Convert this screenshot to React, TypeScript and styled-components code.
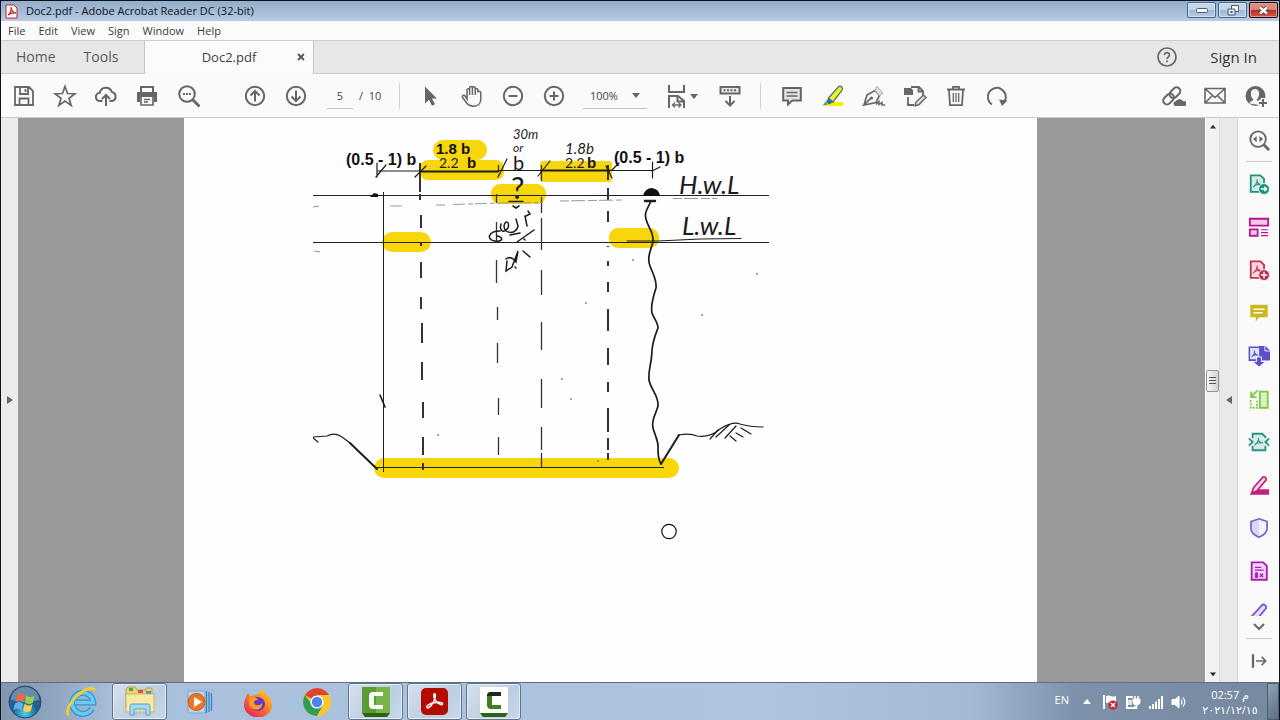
import React from "react";
import styled, { createGlobalStyle, css } from "styled-components";

const ui = `"Open Sans", "Noto Sans", "DejaVu Sans", sans-serif`;

const GlobalStyle = createGlobalStyle`
  * { box-sizing: border-box; }
  body { margin: 0; font-family: ${ui}; font-size: 11px; color: #333; }
  button, input, select { font: inherit; color: inherit; background: none; border: 0; padding: 0; margin: 0; }
  svg { display: block; flex: none; }
`;

const Desktop = styled.div`
  display: flex;
  flex-direction: column;
  height: 100vh;
  border: 1px solid #10121c;
  border-bottom: 0;
  overflow: hidden;
`;

/* ---------- title bar ---------- */
const TitleBar = styled.header`
  display: flex;
  align-items: center;
  height: 20px;
  flex: none;
  padding-left: 4px;
  background: linear-gradient(#93aecb, #a7bdd8 60%, #b9cce4);
`;
const Title = styled.h1`
  margin: 0 auto 0 8px;
  font-size: 11px;
  line-height: 16px;
  font-weight: 400;
  color: #10141c;
`;
const WindowButtons = styled.div`
  display: flex;
  gap: 2px;
  align-self: flex-start;
  padding: 1px 1px 0 0;
`;
const WindowButton = styled.button<{ $close?: boolean }>`
  display: grid;
  place-items: center;
  width: 29px;
  height: 16px;
  border: 1px solid #4c6484;
  border-radius: 2px;
  box-shadow: inset 0 0 0 1px #d3e2f3;
  background: linear-gradient(#c3d5ea 48%, #9db8d6 52%, #b7cde6);
  ${(p) =>
    p.$close &&
    css`
      border-color: #30060a;
      box-shadow: inset 0 0 0 1px #dc9a92;
      background: linear-gradient(#d98b80 45%, #b92f24 52%, #cf5a48);
    `}
`;

/* ---------- menu and tabs ---------- */
const MenuBar = styled.nav`
  display: flex;
  align-items: center;
  gap: 13px;
  height: 19px;
  flex: none;
  padding-left: 7px;
  background: #fbfbfb;
`;
const MenuItem = styled.button`
  line-height: 18px;
  color: #3c3c3c;
`;
const TabBar = styled.div`
  display: flex;
  align-items: stretch;
  height: 34px;
  flex: none;
  background: #e8e7e8;
  border-top: 1px solid #cfcfcf;
  box-shadow: inset 0 -1px #cbcbcb;
  font-size: 14px;
`;
const HomeTabs = styled.div`
  display: flex;
  gap: 28px;
  width: 144px;
  padding-left: 15px;
  padding-bottom: 2px;
  border-right: 1px solid #c4c4c4;
`;
const TabButton = styled.button`
  color: #5a5a5a;
`;
const FileTab = styled.div`
  display: grid;
  grid-template-columns: 24px 1fr 24px;
  align-items: center;
  width: 169px;
  padding-bottom: 2px;
  background: #fbfbfb;
  border-right: 1px solid #c4c4c4;
  font-size: 13px;
  text-align: center;
  color: #3f3f3f;
`;
const FileName = styled.button`
  grid-column: 2;
`;
const CloseTab = styled.button`
  display: grid;
  place-items: center;
  height: 24px;
`;
const Account = styled.div`
  display: flex;
  align-items: center;
  gap: 32px;
  margin-left: auto;
  padding-right: 22px;
  padding-bottom: 2px;
  font-size: 15px;
`;

/* ---------- tool bar ---------- */
const ToolBar = styled.div`
  display: flex;
  align-items: center;
  height: 44px;
  flex: none;
  padding: 0 3px 0 2px;
  background: #fafafa;
  border-bottom: 1px solid #c9c9c9;
`;
const Group = styled.div<{ $before?: number; $end?: boolean }>`
  display: flex;
  margin-left: ${(p) => (p.$end ? "auto" : `${p.$before ?? 0}px`)};
`;
const ToolButton = styled.button`
  display: grid;
  place-items: center;
  width: 41px;
  height: 40px;
`;
const FitButton = styled.button`
  display: flex;
  align-items: center;
  gap: 1px;
  height: 40px;
  width: 41px;
  margin-left: 18px;
`;
const Divider = styled.span`
  width: 1px;
  height: 26px;
  background: #d0d0d0;
`;
const PageField = styled.label`
  display: flex;
  align-items: center;
  gap: 6px;
  width: 72px;
  margin-left: 11px;
  color: #444;
`;
const PageInput = styled.input`
  width: 26px;
  height: 26px;
  text-align: center;
  border-bottom: 1px solid #c2c2c2;
`;
const ZoomField = styled.label`
  display: flex;
  align-items: center;
  width: 64px;
  height: 26px;
  margin-left: 9px;
  padding-left: 7px;
  border-bottom: 1px solid #c2c2c2;
  color: #444;
`;
const ZoomSelect = styled.select`
  appearance: none;
  width: 42px;
`;

/* ---------- work area ---------- */
const Work = styled.div`
  display: flex;
  flex: 1;
  min-height: 0;
`;
const SideStrip = styled.button`
  display: grid;
  place-items: center;
  width: 17px;
  flex: none;
  background: #ececec;
`;
const DocumentArea = styled.main`
  display: flex;
  justify-content: center;
  flex: 1;
  min-width: 0;
  padding-right: 2px;
  overflow: hidden;
  background: #999;
`;
const Sheet = styled.article`
  flex: none;
  width: 853px;
  padding-left: 129px;
  background: #fefefe;
`;
const ScrollBar = styled.div`
  display: flex;
  flex-direction: column;
  align-items: center;
  width: 15px;
  flex: none;
  background: #f1f1f1;
  border-left: 1px solid #fff;
  border-right: 1px solid #dadada;
`;
const ScrollArrow = styled.button`
  display: grid;
  place-items: center;
  width: 13px;
  height: 17px;
`;
const Track = styled.span<{ $grow: number }>`
  flex: ${(p) => p.$grow};
`;
const Thumb = styled.button`
  display: grid;
  place-items: center;
  width: 13px;
  height: 22px;
  border: 1px solid #959595;
  border-radius: 2px;
  background: linear-gradient(90deg, #f6f6f6, #d3d3d3);
`;
const PaneToggle = styled.button`
  display: grid;
  place-items: center;
  width: 18px;
  flex: none;
  background: #e9e9e9;
  border-right: 1px solid #d2d2d2;
`;
const ToolsPane = styled.aside`
  display: flex;
  flex-direction: column;
  width: 41px;
  flex: none;
  background: #fafafa;
`;
const PaneList = styled.div`
  flex: 1;
  min-height: 0;
  overflow: hidden;
`;
const PaneButton = styled.button<{ $short?: boolean }>`
  display: grid;
  place-items: center;
  width: 41px;
  height: ${(p) => (p.$short ? 22 : 43)}px;
`;
const PaneRule = styled.hr`
  width: 26px;
  height: 1px;
  flex: none;
  margin: 0 auto;
  border: 0;
  background: #cfcaca;
`;

/* ---------- task bar ---------- */
const TaskBar = styled.footer`
  display: flex;
  align-items: stretch;
  height: 38px;
  flex: none;
  border-top: 1px solid #5b6f87;
  background: linear-gradient(90deg, #8296ae, #8fa4be 4%, #a9c0dc 9%, #adc5e0 60%, #a3bad5 76%, #7d91aa 84%, #76899f);
`;
const Apps = styled.div`
  display: flex;
  gap: 4px;
`;
const AppButton = styled.button<{ $open?: boolean; $start?: boolean }>`
  display: grid;
  place-items: center;
  width: ${(p) => (p.$start ? 48 : 55)}px;
  ${(p) =>
    p.$open &&
    css`
      border: 1px solid #61748c;
      border-radius: 3px;
      box-shadow: inset 0 0 0 1px #e4edf7;
      background: linear-gradient(135deg, #d6e0ec, #bccee2 60%, #c9d9eb);
    `}
`;
const Tray = styled.div`
  display: flex;
  align-items: center;
  gap: 5px;
  margin-left: auto;
  color: #fff;
`;
const TrayButton = styled.button`
  display: grid;
  place-items: center;
  width: 18px;
  height: 24px;
`;
const Language = styled.button`
  margin-right: 4px;
  line-height: 16px;
  padding-bottom: 4px;
`;
const Clock = styled.button`
  width: 64px;
  margin-left: 5px;
  line-height: 15px;
  text-align: center;
`;
const ShowDesktop = styled.button`
  width: 12px;
  align-self: stretch;
  border: 1px solid #4c5d73;
  background: linear-gradient(135deg, #90a1b5, #5d6f86);
`;

/* ---------- icons ---------- */
type IconProps = { size?: number; color?: string; children: React.ReactNode; width?: number };
const Icon = ({ size = 24, color = "#666", width = 2, children }: IconProps) => (
  <svg width={size} height={size} viewBox="0 0 24 24" fill="none" stroke={color} strokeWidth={width} aria-hidden="true">
    {children}
  </svg>
);
const Caret = ({ dir = "down", color = "#666", size = 8 }: { dir?: string; color?: string; size?: number }) => {
  const d: Record<string, string> = {
    down: "M0 2h8L4 7z",
    up: "M0 6h8L4 1z",
    left: "M7 0v8L1 4z",
    right: "M1 0v8l6-4z",
  };
  return (
    <svg width={size} height={size} viewBox="0 0 8 8" fill={color} aria-hidden="true">
      <path d={d[dir]} />
    </svg>
  );
};

const fileTools = [
  ["Save", <path key="a" d="M3 3h14l4 4V21H3zM8 3.500v6.500h8V3.500M7.500 20.500v-6h9v6M13.500 5v3" strokeWidth={1.800} />],
  ["Star", <path key="a" d="M12 2.500l2.500 7 7.400.2-5.900 4.500 2.200 7.200-6.200-4.300-6.200 4.300L8 14.200 2.100 9.700l7.400-.2z" strokeWidth={1.700} />],
  ["Upload", <g key="a"><path d="M8.500 17H6.200a4.100 4.100 0 0 1-.4-8.200A6.200 6.200 0 0 1 17.800 8a4.600 4.600 0 0 1 .2 9h-2.500" /><path d="M12 22V11M8 15l4-4 4 4" /></g>],
  ["Print", <g key="a"><path d="M6 8V3h12V8" /><path d="M2 8h20v10h-3v-5H5v5H2z" fill="#666" stroke="none" /><path d="M6 13v8h12v-8M9 15.500h6M9 18h4" strokeWidth={1.700} /></g>],
  ["Find", <g key="a"><circle cx="11" cy="10" r="7.800" /><path d="M16.500 15.500l7 7" strokeWidth={2.800} /><path d="M7 10h2M10 10h2M13 10h2" /></g>],
] as const;
const pageTools = [
  ["Previous page", <g key="a"><circle cx="12" cy="12" r="9.200" /><path d="M12 17.500V7M7.500 11.500L12 7l4.500 4.500" /></g>],
  ["Next page", <g key="a"><circle cx="12" cy="12" r="9.200" /><path d="M12 6.500V17M7.500 12.500L12 17l4.500-4.500" /></g>],
] as const;
const viewTools = [
  ["Select", <path key="a" d="M6 2.500v17l4-3.800 3 6 3-1.400-3-5.800h5z" fill="#666" stroke="none" />],
  ["Hand", <path key="a" d="M7 15V6.200c0-2 2.600-2 2.600 0V11 4c0-2 2.800-2 2.800 0v7V4.300c0-2 2.800-2 2.800 0V11 6c0-1.900 2.600-1.900 2.600 0v2.500c.2-1.800 3-1.600 3 .5V15c0 4.500-2.800 7.200-7 7.200-4.500 0-6.800-2.200-8.600-5.200L2.600 13.500c-1-2 1.300-2.900 2.500-1.500z" strokeWidth={1.500} />],
  ["Zoom out", <g key="a"><circle cx="12" cy="12" r="9.200" /><path d="M7.500 12h9" /></g>],
  ["Zoom in", <g key="a"><circle cx="12" cy="12" r="9.200" /><path d="M7.500 12h9M12 7.500v9" /></g>],
] as const;
const editTools = [
  ["Comment", <g key="a"><path d="M3.200 4h17.600v12.500h-8.500L8 20.500v-4H3.200z" fill="#e3e3e3" /><path d="M6.500 8.500h11M6.500 12h11" strokeWidth={1.500} /></g>],
  ["Highlight", <g key="a"><path d="M3 18h19v4H5z" fill="#f6f000" stroke="none" /><path d="M7.500 14L17.500 2.800c2-1.400 4.800.6 3.700 3L12 18z" fill="#edf71c" stroke="#4b7a78" strokeWidth={1.300} /><path d="M7.300 14l4.700 4.200-4 2.300-3-2.500z" fill="#2f6fb5" stroke="none" /><path d="M5 17.500L1.500 21.500l4.500-.6z" fill="#4d87c2" stroke="none" /></g>],
  ["Sign", <g key="a"><path d="M2 21L5 11l8-4.500 4.500 5-3.500 7L2 21l7-7" strokeWidth={1.700} /><path d="M13 6.500l2-4 6 6.500-3.500 2.500z" fill="#dedede" stroke="#aaa" strokeWidth={1} /><path d="M14 20.500l3-3v3l3-2v2.500h3" strokeWidth={1.500} /><circle cx="9.500" cy="14" r="1.600" fill="#666" stroke="none" /></g>],
  ["Edit", <g key="a"><path d="M8 3h8l4 4v4M15.500 3v4.500h4.500M5 13v8h6" strokeWidth={1.800} /><path d="M1 4h7l2 2v5H1z" fill="#666" stroke="none" /><path d="M12 21.800l1-3.800 7.500-7 2.500 2.600-7.300 7.200z" fill="#ddd" strokeWidth={1.400} /></g>],
  ["Delete", <g key="a"><path d="M3 5.500h18M9 5V2.800h6V5M5 6l1 15.200h12L19 6" strokeWidth={1.800} /><path d="M9.300 9v9M12 9v9M14.700 9v9" strokeWidth={1.300} /></g>],
  ["Rotate", <g key="a"><path d="M7 20.500a9 9 0 1 1 12.800-3.500" /><path d="M14 15.500l8.500 1-5.500 5.500z" fill="#666" stroke="none" /></g>],
] as const;
const shareTools = [
  ["Share link", <g key="a"><g transform="rotate(-45 11 11)"><rect x="-1" y="7" width="12" height="7.500" rx="3.700" /><rect x="8" y="7" width="12" height="7.500" rx="3.700" /></g><path d="M13 22.500a3 3 0 0 1 .8-5.800 4.200 4.200 0 0 1 7.200 0 3 3 0 0 1 2 5.800z" fill="#666" stroke="#fafafa" strokeWidth={1} /></g>],
  ["Mail", <path key="a" d="M2 4.500h20v14.500H2zM2.500 5l9.500 8.500L21.500 5M2.500 18.500l7-7M21.500 18.500l-7-7" strokeWidth={1.600} />],
  ["Add person", <g key="a"><circle cx="11.500" cy="12" r="10" fill="#666" stroke="none" /><path d="M5.500 19.500c.3-2.500 3.700-2.300 3.700-4C7 13.500 6.600 10.500 7 8c.8-4 7.300-4 8 0 .4 2.500 0 5.500-2.200 7.500 0 1.700 2 1.800 3 2.500l-1 3z" fill="#f6f6f6" stroke="none" /><path d="M19 14v9M14.500 18.500h9" stroke="#fafafa" strokeWidth={5} /><path d="M19 15v8M15 19h8" strokeWidth={2} /></g>],
] as const;

const Acro = ({ color }: { color: string }) => (
  <path d="M5.500 15.500c2-1 5-5.500 4.500-8.500M9.800 9c.8 2.500 2.700 4 5 4M6.500 14c2-1.200 5-1.800 8-1.500" stroke={color} strokeWidth={1.200} />
);
const PdfSheet = ({ color, fill }: { color: string; fill: string }) => (
  <>
    <path d="M3 2.500h10.500l4 4V20.500H3z" fill={fill} stroke={color} />
    <Acro color={color} />
  </>
);
const paneTools = [
  ["Export PDF", "#27907f", <g key="a"><PdfSheet color="#27907f" fill="#d3ece8" /><circle cx="17.500" cy="17.500" r="6" fill="#1e9080" stroke="#fafafa" strokeWidth={1} /><path d="M14 17.500h6M17.800 15l2.500 2.500-2.500 2.500" stroke="#fff" strokeWidth={1.500} /></g>],
  ["Organize", "#b5188f", <g key="a"><path d="M2 3h20v7.500H2z" fill="#f5c8ea" /><path d="M2 14.500h8.500v7H2z" fill="#f5c8ea" /><path d="M14 15h8M14 18.200h8M14 21.400h8" strokeWidth={1.300} /></g>],
  ["Create PDF", "#c33250", <g key="a"><PdfSheet color="#c33250" fill="#f9d9de" /><circle cx="17.500" cy="17.500" r="6" fill="#c12d50" stroke="#fafafa" strokeWidth={1} /><path d="M14 17.500h7M17.500 14v7" stroke="#fff" strokeWidth={1.600} /></g>],
  ["Comment", "#cdb81c", <g key="a"><path d="M2.500 3h19v13.500H12L8.500 21v-4.500h-6z" fill="#cdb81c" stroke="none" /><path d="M6 8h12M6 11.800h10" stroke="#fff" strokeWidth={1.700} /></g>],
  ["Combine", "#5b50cc", <g key="a"><path d="M12 1h7l5 5v11H12z" fill="#5b50cc" stroke="none" /><path d="M18.500 1v5.500H24" stroke="#fafafa" strokeWidth={1} /><path d="M1.500 2.500h11.500v14H1.500z" fill="#e4e2f8" stroke="#5b50cc" strokeWidth={1.700} /><path d="M4 13c1.500-1 3.500-4 3-7M7 8c.5 2 2 3 4 3.200M4.500 11.500l5-1" strokeWidth={1.200} /><path d="M9.300 13h5.400v5H19l-7 6-7-6h4.300z" fill="#5b50cc" stroke="#fafafa" strokeWidth={1} /></g>],
  ["Compress pages", "#7fc944", <g key="a"><path d="M13 4h8.500v17.500H13z" fill="#d9f3c6" /><path d="M10 14v7.500H3V13" strokeDasharray="2 1.500" /><path d="M10.500 2.500L4 9M3.500 4v6h6" strokeWidth={2} /></g>],
  ["Compress PDF", "#2b9384", <g key="a"><path d="M5 8V3h10.500L19 6.500V8M19 16v5H5v-5" fill="#d3ece8" /><path d="M5 8h14v8H5z" fill="#d3ece8" stroke="none" /><path d="M1 8l4 4-4 4M23 8l-4 4 4 4" /><path d="M7 15.500c2-1 5-4.500 4.500-8M11.300 9.500c.8 2 2.500 3.500 5 3.500M8 14c2-1 5-1.500 7-1" strokeWidth={1.200} /></g>],
  ["Redact", "#b5207c", <g key="a"><path d="M10 16.500h13v6H1.500z" fill="#c0217f" stroke="none" /><path d="M6 15L16 3.600c1.700-1.600 5 .6 3.700 3L9.500 18.500 4 21z" fill="#f7d3e6" strokeWidth={1.800} /></g>],
  ["Protect", "#6f5fc8", <g key="a"><path d="M12 2l8.800 3v7.500c0 4.500-4 7.500-8.800 9.500-4.800-2-8.800-5-8.800-9.500V5z" fill="#f3f1fc" stroke="none" /><path d="M12 2v20c-4.800-2-8.800-5-8.800-9.500V5z" fill="#dad6f5" stroke="none" /><path d="M12 2l8.800 3v7.500c0 4.500-4 7.500-8.800 9.500-4.800-2-8.800-5-8.800-9.500V5z" strokeWidth={1.800} /></g>],
  ["Prepare form", "#a31fae", <g key="a"><path d="M4 2.500h12.500l4 4v15H4z" fill="#f4d5f7" /><path d="M7.500 8h7M7.500 11h9.500" strokeWidth={1.500} /><path d="M8 14h2.500v5H8z" fill="#a31fae" strokeWidth={1} /><path d="M13 15l3.500 3.500M16.500 15L13 18.500" strokeWidth={1.400} /></g>],
] as const;

/* ---------- the drawing on the sheet ---------- */
const Ink = styled.g`
  fill: none;
  stroke: #1c1c1c;
  stroke-linecap: round;
`;
const Typed = styled.text<{ $large?: boolean }>`
  font: bold ${(p) => (p.$large ? 16 : 15)}px "Liberation Sans", sans-serif;
  fill: #111;
`;
const Written = styled.text<{ $size: number; $slant?: boolean }>`
  font-family: Lato, sans-serif;
  font-weight: 400;
  font-size: ${(p) => p.$size}px;
  font-style: ${(p) => (p.$slant ? "italic" : "normal")};
  fill: #1c1c1c;
`;
const markers = [
  [433, 140, 54, 20, 10],
  [420, 160, 84, 20, 8],
  [491, 184, 55, 20, 9],
  [540, 161, 72, 21, 3],
  [382, 232, 49, 20, 10],
  [609, 228, 50, 20, 9],
  [374, 458, 305, 20, 10],
];
const dashes: [number, number[][]][] = [
  [419, [[163, 192], [194, 200]]],
  [420, [[215, 228], [243, 246], [262, 278], [297, 309]]],
  [421, [[323, 343], [362, 380]]],
  [422, [[402, 418], [437, 455], [463, 470]]],
  [496, [[194, 203], [222, 243], [260, 283]]],
  [497, [[307, 320], [343, 363]]],
  [498, [[165, 172], [398, 415], [437, 455]]],
  [541, [[165, 181], [197, 213], [218, 250], [270, 295], [322, 350], [379, 408], [427, 450], [453, 467]]],
  [607, [[165, 180], [188, 200], [211, 222], [246, 247], [261, 266], [282, 292], [309, 331], [348, 365], [382, 392], [408, 432], [438, 450], [453, 460]]],
];

const Section = () => (
  <svg width="460" height="564" viewBox="313 118 460 564" role="img" aria-label="Cross section sketch">
    {markers.map(([x, y, w, h, r]) => (
      <rect key={`${x}-${y}`} x={x} y={y} width={w} height={h} rx={r} fill="#f7d60c" />
    ))}
    <path d="M313 195.500H769M313 242.500H769M383.500 192V472M376 467.500H664" stroke="#222" strokeWidth="1" />
    <Ink>
      {dashes.map(([x, parts]) =>
        parts.map(([a, b]) => {
          const bold = x > 600 || x < 424;
          return (
            <path
              key={`${x}-${a}`}
              d={`M${bold ? x + 1 : x + 0.5} ${a}V${b}`}
              strokeWidth={bold ? 2 : 1.3}
              stroke="#333"
              strokeLinecap="butt"
            />
          );
        })
      )}
    </Ink>
    <Ink strokeWidth="1.200">
      <path d="M378 171H420M498 170.500H541M611 170.500H653" />
      <path d="M420 171.500H498M541 170.500H610" strokeWidth="1.800" />
      <path d="M377 163V177M376 177L386 165M415 177L426 166M498 177L507 159M538 176L550 161M612 170L619 163M652.500 162V178M652 171L660 167M606 166L612 178" />
      <path d="M380 395L385 407" strokeWidth="1.600" />
      <path d="M651 201C648 208 644 212 646 219C648 228 654 232 653 242C650 252 647 258 650 266C653 274 657 280 656 288C652 300 651 308 652 313C654 319 658 322 658 328C655 336 653 340 652 350C652 362 648 370 649 380C651 390 659 396 658 406C656 414 651 420 653 428C655 436 659 441 658 449C658 456 659 461 661 464" strokeWidth="1.700" />
      <path d="M661 464L679 435M350 443L377 469" strokeWidth="2" />
      <path d="M679 435Q690 433 697 436Q710 438 720 429Q733 421 740 424Q750 427 763 427M313 437L327 436Q335 432 342 437L350 443M313 438L318 442" />
      <path d="M718 430L710 439M729 425L716 437M736 426L725 438M730 436L736 441M736 433L743 437M741 428L751 434" />
      <path d="M645 201H655" strokeWidth="2.400" />
      <path d="M509 201.500H523M513 206L516 208L519 206" strokeWidth="1.600" />
      <path d="M658 241L700 239L741 238.500M627 241H658" strokeWidth="1.200" />
    </Ink>
    <path d="M643 196Q645 188 652 188Q659 189 660 196zM370 197L374 193L378 194V197z" fill="#111" />
    <g fill="none" stroke="#999" strokeWidth="1">
      <path d="M390 206H402M453 204.500L500 203L543 202.500" strokeDasharray="12 3 5 2" />
      <path d="M436 205H447M560 201L622 200M673 198.500H717" strokeDasharray="9 2 14 3" />
      <path d="M313 207l6-1M314 251l6 1" />
    </g>
    <g fill="#888">
      {[[438, 435], [571, 399], [633, 260], [702, 315], [757, 274], [562, 379], [586, 303], [598, 461]].map(([x, y]) => (
        <circle key={x} cx={x} cy={y} r="1" />
      ))}
    </g>
    <Typed $large x="346" y="165">(0.5 - 1) b</Typed>
    <Typed x="436" y="154">1.8 b</Typed>
    <Typed x="467" y="168">b</Typed>
    <Typed x="587" y="168">b</Typed>
    <Typed $large x="614" y="163">(0.5 - 1) b</Typed>
    <Written $size={14} x="439" y="168">2.2</Written>
    <Written $size={14} x="565" y="168">2.2</Written>
    <Written $size={15} $slant x="565" y="154">1.8b</Written>
    <Written $size={13} $slant x="513" y="139">30m</Written>
    <Written $size={12} $slant x="513" y="152">or</Written>
    <Written $size={20} x="513" y="170">b</Written>
    <Written $size={30} x="511" y="199">?</Written>
    <Written $size={26} $slant x="679" y="194">H.w.L</Written>
    <Written $size={26} $slant x="682" y="235">L.w.L</Written>
    {/* pen scribble under the question mark */}
    <Ink strokeWidth="1.500">
      <path d="M501 224C499 231 504 234 508 228C510 221 505 220 504 226C504 234 516 235 518 226L516 219M500 231C488 231 486 240 495 241C503 242 504 237 497 236M510 235L520 233M525 216L527 226M526 216L530 214L528 211M534 230L517 242M524 239L525 240M507 261L506 271L512 267L518 251L516 262C513 258 510 256 506 259M523 251L530 257M515 267L516 268" />
    </Ink>
    <circle cx="669" cy="531.500" r="7.200" fill="#fff" stroke="#111" strokeWidth="1.200" />
  </svg>
);

/* ---------- task bar pictures ---------- */
const StartOrb = () => (
  <svg width="34" height="34" viewBox="0 0 34 34" aria-hidden="true">
    <defs>
      <radialGradient id="orb" cx="50%" cy="85%" r="85%">
        <stop offset="0" stopColor="#4fd0f0" />
        <stop offset=".45" stopColor="#1a6398" />
        <stop offset="1" stopColor="#3b5f86" />
      </radialGradient>
    </defs>
    <circle cx="17" cy="17" r="16" fill="url(#orb)" stroke="#28486b" />
    <path d="M3 15a14 13 0 0 1 28 0q-14 4-28 0z" fill="#fff" opacity=".28" />
    <path d="M9 10q4-3 8 0l-1.500 7q-4-3-8 0z" fill="#ef6a3a" />
    <path d="M18.500 10.500q4 3 8 0L25 17.500q-4 3-8 0z" fill="#9ccc4a" />
    <path d="M7 18.500q4-3 8 0l-1.500 6.500q-4-3-8 0z" fill="#63b2ee" />
    <path d="M16.500 19q4 3 8 0L23 25.500q-4 3-8 0z" fill="#fbd14b" />
  </svg>
);
const Explorer = () => (
  <svg width="32" height="32" viewBox="0 0 32 32" aria-hidden="true">
    <path d="M2 3l2-2h7l2 3h9V2h6v20H2z" fill="#e9d47e" stroke="#b9a04b" />
    <path d="M5 2h4v3H5z" fill="#56a348" /><path d="M14 4h5v3h-5z" fill="#d4574a" /><path d="M22 5h5v3h-5z" fill="#4a8fce" />
    <path d="M2 8h28v18H2z" fill="#f8e9a4" stroke="#cdb45e" />
    <path d="M6 29V20q0-2 2-2h16q2 0 2 2v9h-4v-6H10v6z" fill="#a5d8f2" stroke="#5f9fc6" />
    <path d="M12 23v6M16 23v5M20 23v6" stroke="#8ec6e6" />
  </svg>
);
const InternetExplorer = () => (
  <svg width="32" height="32" viewBox="0 0 32 32" fill="none" aria-hidden="true">
    <path d="M27 22.500a10.500 10.500 0 1 1 1.300-6H10" stroke="#2f95d3" strokeWidth="6" />
    <path d="M27 22.500a10.500 10.500 0 1 1 1.300-6H10" stroke="#6cc9f2" strokeWidth="3.500" />
    <path d="M4 29C0 27 4 17 13 9S29 1 30 5" stroke="#f0cf2f" strokeWidth="2.800" />
  </svg>
);
const MediaPlayer = () => (
  <svg width="28" height="28" viewBox="0 0 28 28" aria-hidden="true">
    <path d="M3 3h17v22H3z" fill="#b7d4ec" stroke="#7fa9cd" />
    <path d="M21.500 3v22M24 4v20M26.500 5v18" stroke="#3a86c4" strokeWidth="1.300" />
    <circle cx="11.500" cy="14" r="8.500" fill="#ee7523" stroke="#c55b14" />
    <path d="M9 9l8 5-8 5z" fill="#fff" />
  </svg>
);
const Firefox = () => (
  <svg width="30" height="30" viewBox="0 0 30 30" aria-hidden="true">
    <defs>
      <linearGradient id="fox" x1="1" y1="0" x2=".2" y2="1">
        <stop offset="0" stopColor="#ffe83a" />
        <stop offset=".45" stopColor="#ff8a1c" />
        <stop offset="1" stopColor="#e81f5f" />
      </linearGradient>
    </defs>
    <path d="M18 1c2 3 4 4 5 6 3 2 6 6 6 11a14 12.500 0 0 1-28 0C1 13 3 10 5 6l2 4c1-1 3-2 5-2 3 0 5-2 6-7z" fill="url(#fox)" />
    <circle cx="15" cy="17" r="7" fill="#6a38c8" />
    <path d="M6 11c4-2 8 0 9 2-3 0-4 1-4 3 1 3 6 3 8 0 1 5-4 8-8 6-4-1-6-5-5-11z" fill="#ff9a24" />
  </svg>
);
const Chrome = () => (
  <svg width="30" height="30" viewBox="0 0 30 30" aria-hidden="true">
    <circle cx="15" cy="15" r="14" fill="#fbc62f" />
    <path d="M15 15L2.900 8A14 14 0 0 1 27.100 8z" fill="#dc4437" />
    <path d="M2.900 8A14 14 0 0 0 15 29l6.500-11L15 15 9 16z" fill="#2f9e54" />
    <path d="M15 8h12.100A14 14 0 0 1 15 29l6-10.500z" fill="#fbc62f" />
    <circle cx="15" cy="15" r="6.600" fill="#fff" />
    <circle cx="15" cy="15" r="5.200" fill="#4a83ee" />
  </svg>
);
const Camtasia = ({ light }: { light?: boolean }) => (
  <svg width="30" height="32" viewBox="0 0 30 32" aria-hidden="true">
    <path d="M1 1h28v26H1z" fill={light ? "#fff" : "#5a9c34"} />
    {!light && <path d="M15 1h14v26H15z" fill="#78b548" />}
    <path d="M1 27h28l-3 4H4z" fill="#2c6414" />
    <path d="M22 6v4h-9v9h9v4h-10q-4 0-4-4V10q0-4 4-4z" fill={light ? "#3d8021" : "#fff"} />
    {light && <path d="M8 10q0-4 4-4h10v4h-9z" fill="#1d2c18" />}
  </svg>
);
const AcrobatTile = () => (
  <svg width="27" height="27" viewBox="0 0 27 27" fill="none" aria-hidden="true">
    <rect x="0" y="0" width="27" height="27" rx="5" fill="#b30b00" />
    <path d="M6 19.500c-1.500-1.500 3-4 7-4.700 4-.8 9-.6 8.500 1.200-.6 2-5.500-.8-7.500-4.300-1.500-3-1.600-6-.4-6 1.500.2.600 5-1.100 8.300-1.800 3.500-5 7-6.500 5.500z" stroke="#fff" strokeWidth="1.500" />
  </svg>
);

const ToolSet = ({ items }: { items: readonly (readonly [string, React.ReactNode])[] }) => (
  <>
    {items.map(([label, art]) => (
      <ToolButton key={label} aria-label={label}>
        <Icon>{art}</Icon>
      </ToolButton>
    ))}
  </>
);

export default function App() {
  return (
    <Desktop>
      <GlobalStyle />
      <TitleBar>
        <svg width="13" height="15" viewBox="0 0 13 15" aria-hidden="true">
          <path d="M1 1h8l3 3v10H1z" fill="#fff" stroke="#b8252a" />
          <path d="M3 11c2-1 4-5 3-8 0 3 2 6 5 6-3-.5-5 0-8 2z" fill="#fff" stroke="#d32027" strokeWidth="1.300" />
        </svg>
        <Title>Doc2.pdf - Adobe Acrobat Reader DC (32-bit)</Title>
        <WindowButtons>
          <WindowButton aria-label="Minimize">
            <svg width="12" height="5" viewBox="0 0 12 5"><rect x=".5" y=".5" width="11" height="4" rx="1" fill="#fff" stroke="#4b5b70" /></svg>
          </WindowButton>
          <WindowButton aria-label="Restore">
            <svg width="12" height="11" viewBox="0 0 12 11"><path d="M4.500.5h7v6h-7z" fill="#fff" stroke="#4b5b70" /><path d="M1 4h7v6H1z" fill="#dbe6f2" stroke="#4b5b70" /><path d="M3.500 6h2v2h-2z" fill="#4b5b70" /></svg>
          </WindowButton>
          <WindowButton $close aria-label="Close">
            <svg width="11" height="9" viewBox="0 0 11 9"><path d="M2 1.500l7 6M9 1.500l-7 6" stroke="#5b3030" strokeWidth="4" /><path d="M2 1.500l7 6M9 1.500l-7 6" stroke="#fff" strokeWidth="2.400" /></svg>
          </WindowButton>
        </WindowButtons>
      </TitleBar>

      <MenuBar>
        {["File", "Edit", "View", "Sign", "Window", "Help"].map((m) => (
          <MenuItem key={m}>{m}</MenuItem>
        ))}
      </MenuBar>

      <TabBar>
        <HomeTabs>
          <TabButton>Home</TabButton>
          <TabButton>Tools</TabButton>
        </HomeTabs>
        <FileTab>
          <FileName>Doc2.pdf</FileName>
          <CloseTab aria-label="Close tab">
            <svg width="8" height="8" viewBox="0 0 8 8"><path d="M1 1l6 6M7 1L1 7" stroke="#555" strokeWidth="1.800" /></svg>
          </CloseTab>
        </FileTab>
        <Account>
          <button aria-label="Help">
            <svg width="22" height="22" viewBox="0 0 22 22" fill="none" stroke="#666">
              <circle cx="11" cy="11" r="9" strokeWidth="1.700" />
              <path d="M8.500 9c0-3.300 5.200-3 5 0 0 1.800-2.500 1.900-2.500 4M11 14.500v1.800" strokeWidth="1.700" />
            </svg>
          </button>
          <button>Sign In</button>
        </Account>
      </TabBar>

      <ToolBar>
        <Group><ToolSet items={fileTools} /></Group>
        <Group $before={26}><ToolSet items={pageTools} /></Group>
        <PageField>
          <PageInput defaultValue="5" aria-label="Page number" />
          <span>/&nbsp; 10</span>
        </PageField>
        <Divider />
        <Group $before={10}><ToolSet items={viewTools} /></Group>
        <ZoomField>
          <ZoomSelect aria-label="Zoom level" defaultValue="100%">
            <option>100%</option>
            <option>125%</option>
          </ZoomSelect>
          <Caret />
        </ZoomField>
        <FitButton aria-label="Fit page">
          <Icon>
            <path d="M4 1v7h15V1" />
            <path d="M4 24V12h9l6 5v7M12.500 12v5.500H19" />
            <path d="M7.500 21h8M10 18.500L7.500 21l2.500 2.500M13.500 18.500L16 21l-2.500 2.500" strokeWidth={1.300} />
          </Icon>
          <Caret />
        </FitButton>
        <Group $before={3}>
          <ToolButton aria-label="Read mode">
            <Icon>
              <path d="M2.500 3h19v6.500h-19z" fill="#e8e8e8" />
              <path d="M5.500 6.200h13" strokeDasharray="2 1.500" />
              <path d="M12 12v9M7.500 17l4.500 4.500 4.500-4.500" />
            </Icon>
          </ToolButton>
        </Group>
        <Group $before={10}><Divider /></Group>
        <Group $before={10}><ToolSet items={editTools} /></Group>
        <Group $end><ToolSet items={shareTools} /></Group>
      </ToolBar>

      <Work>
        <SideStrip aria-label="Show navigation pane"><Caret dir="right" /></SideStrip>
        <DocumentArea>
          <Sheet><Section /></Sheet>
        </DocumentArea>
        <ScrollBar>
          <ScrollArrow aria-label="Scroll up"><Caret dir="up" color="#333" size={6} /></ScrollArrow>
          <Track $grow={235} />
          <Thumb aria-label="Scroll position">
            <svg width="7" height="8" viewBox="0 0 7 8"><path d="M0 .5h7M0 3.500h7M0 6.500h7" stroke="#555" /></svg>
          </Thumb>
          <Track $grow={273} />
          <ScrollArrow aria-label="Scroll down"><Caret color="#222" size={6} /></ScrollArrow>
        </ScrollBar>
        <PaneToggle aria-label="Hide tools pane"><Caret dir="left" /></PaneToggle>
        <ToolsPane>
          <PaneList>
            <PaneButton aria-label="Search tools">
              <Icon size={22}><circle cx="11" cy="11" r="8.500" /><path d="M17 17l6 6" strokeWidth={3} /><path d="M9.500 7.500v7L5.500 11zM12.500 7.500v7l4-3.500z" fill="#666" stroke="none" /></Icon>
            </PaneButton>
            <PaneRule />
            {paneTools.map(([label, color, art]) => (
              <PaneButton key={label} aria-label={label}>
                <Icon size={22} color={color}>{art}</Icon>
              </PaneButton>
            ))}
            <PaneButton aria-label="Fill and sign">
              <Icon size={22} color="#7a5cc4"><path d="M1 18L15 2.500c2-2 6 .5 4.500 3.500L7 21l-5 2z" fill="#e6dcf8" /></Icon>
            </PaneButton>
          </PaneList>
          <PaneButton $short aria-label="More tools">
            <svg width="12" height="8" viewBox="0 0 12 8" fill="none"><path d="M1 1l5 5 5-5" stroke="#666" strokeWidth="2" /></svg>
          </PaneButton>
          <PaneRule />
          <PaneButton aria-label="Collapse tools pane">
            <Icon size={18}><path d="M4 3v18" strokeWidth={3} /><path d="M8 12h13M15.500 6.500L21 12l-5.500 5.500" /></Icon>
          </PaneButton>
        </ToolsPane>
      </Work>

      <TaskBar>
        <Apps>
          <AppButton $start aria-label="Start"><StartOrb /></AppButton>
          <AppButton aria-label="Internet Explorer"><InternetExplorer /></AppButton>
          <AppButton $open aria-label="File Explorer"><Explorer /></AppButton>
          <AppButton aria-label="Media Player"><MediaPlayer /></AppButton>
          <AppButton aria-label="Firefox"><Firefox /></AppButton>
          <AppButton aria-label="Chrome"><Chrome /></AppButton>
          <AppButton $open aria-label="Camtasia"><Camtasia /></AppButton>
          <AppButton $open aria-label="Acrobat Reader"><AcrobatTile /></AppButton>
          <AppButton $open aria-label="Camtasia Recorder"><Camtasia light /></AppButton>
        </Apps>
        <Tray>
          <Language>EN</Language>
          <TrayButton aria-label="Show hidden icons"><Caret dir="up" color="#fff" /></TrayButton>
          <TrayButton aria-label="Action Center">
            <svg width="16" height="16" viewBox="0 0 16 16"><path d="M2 1v14" stroke="#fff" strokeWidth="2" /><path d="M4 2q3-1 5 0t5 0v7q-3 1-5 0t-5 0z" fill="#fff" /><circle cx="11" cy="11" r="4.500" fill="#c9202c" /><path d="M9 9l4 4M13 9l-4 4" stroke="#fff" strokeWidth="1.500" /></svg>
          </TrayButton>
          <TrayButton aria-label="Power">
            <svg width="16" height="16" viewBox="0 0 16 16" fill="none" stroke="#fff"><path d="M8 3H2v11h8v-2" strokeWidth="2" /><path d="M4 6v5M6 6v5" strokeWidth="1.500" /><path d="M8 5h7v3q0 3-3.500 3T8 8z" fill="#fff" /><path d="M10 5V2M13 5V2M11.500 10v5" strokeWidth="1.500" /></svg>
          </TrayButton>
          <TrayButton aria-label="Network">
            <svg width="16" height="14" viewBox="0 0 16 14" stroke="#fff" strokeWidth="2"><path d="M2 14v-3M5 14V9M8 14V6.500M11 14V4M14 14V1" /></svg>
          </TrayButton>
          <TrayButton aria-label="Volume">
            <svg width="16" height="14" viewBox="0 0 16 14" fill="none" stroke="#fff"><path d="M1 4.500h3L8 1v12L4 9.500H1z" fill="#fff" /><path d="M10 4.500q2 2.500 0 5M12 2.500q3.500 4.500 0 9" strokeWidth="1.200" /></svg>
          </TrayButton>
          <Clock>
            02:57 م
            <br />
            ٢٠٢١/١٢/١٥
          </Clock>
          <ShowDesktop aria-label="Show desktop" />
        </Tray>
      </TaskBar>
    </Desktop>
  );
}
